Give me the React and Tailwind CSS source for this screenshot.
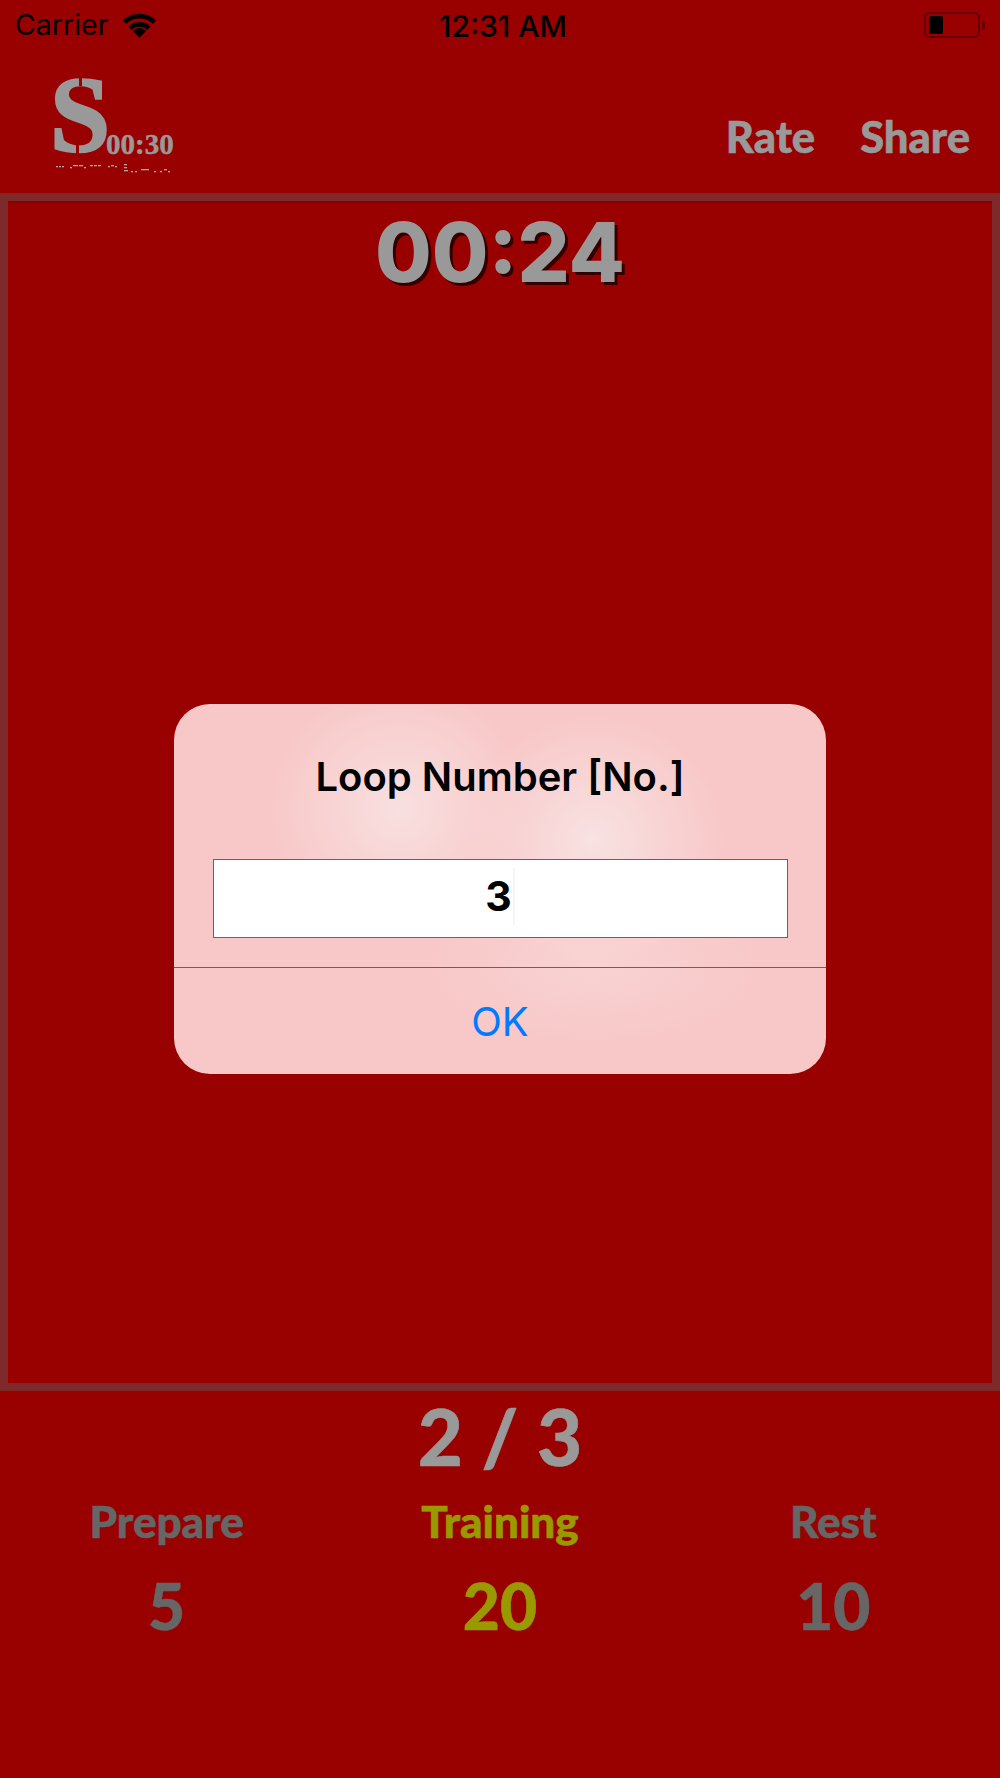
const Wifi = () => (
  <svg width="35" height="26" viewBox="0 0 34 25" className="ml-[14px]">
    <path d="M17 25 L10.5 18 A9.5 9.5 0 0 1 23.5 18 Z" fill="#000" />
    <path d="M7.8 15.6 A13.4 13.4 0 0 1 26.2 15.6" fill="none" stroke="#000" strokeWidth="4.6" />
    <path d="M2.4 9.8 A21 21 0 0 1 31.6 9.8" fill="none" stroke="#000" strokeWidth="4.6" />
  </svg>
);

const Battery = () => (
  <div className="flex items-center">
    <div className="flex h-[26px] w-[56px] items-center rounded-[5px] border-2 border-[#660000] pl-[3px]">
      <div className="h-[18px] w-[14px] rounded-[2px] bg-black" />
    </div>
    <div className="ml-[2px] h-[9px] w-[3px] rounded-r-full bg-[#660000]" />
  </div>
);

const Logo = () => {
  const dots = [
    [0, 0, 2], [3, 0, 2], [6, 0, 2], [14, 1, 2], [17, -1, 5], [23, -1, 4], [28, 1, 2],
    [34, -1, 3], [38, -1, 3], [42, -1, 3], [52, 0, 2], [55, -1, 3], [59, 0, 2],
    [68, -2, 3], [68, 1, 3], [68, 4, 4], [75, 5, 2], [79, 5, 2], [85, 3, 4], [89, 3, 4],
    [98, 5, 2], [104, 5, 2], [108, 3, 3], [112, 5, 2],
  ];
  return (
    <svg width="130" height="130" viewBox="0 0 130 130" className="ml-[50px] -mt-[8px] overflow-visible">
      <text x="0" y="109" fontFamily="Liberation Serif" fontWeight="700" fontSize="108" fill="#999" stroke="#999" strokeWidth="2.5">S</text>
      <rect x="29" y="34" width="3" height="10" fill="#990000" />
      <rect x="26" y="102" width="3" height="10" fill="#990000" />
      <text x="56" y="112" fontFamily="Liberation Serif" fontWeight="700" fontSize="29" fill="#999" stroke="#999" strokeWidth="0.5">00:30</text>
      {dots.map(([x, y, w], i) => (
        <rect key={i} x={x + 6} y={y + 124} width={w} height="1.3" fill="#aaa" />
      ))}
    </svg>
  );
};

const Stat = ({ label, value, color }) => (
  <div className={`flex flex-col items-center [-webkit-text-stroke:0.6px] ${color}`}>
    <div className="text-[44px] font-black leading-[48px]">{label}</div>
    <div className="mt-[28px] text-[64px] font-black leading-[66px]">{value}</div>
  </div>
);

const App = () => {
  return (
    <div className="relative flex h-[1778px] w-full flex-col overflow-hidden bg-[#990000] font-['Lato',sans-serif]">
      <div className="relative flex h-[50px] items-center justify-between pl-[15px] pr-[15px] font-['Inter',sans-serif] text-[28.5px] text-black">
        <div className="flex items-center">
          <span>Carrier</span>
          <Wifi />
        </div>
        <span className="absolute left-[439px] top-[4px] text-[30px] font-medium">12:31 AM</span>
        <Battery />
      </div>

      <div className="flex h-[143px] items-start justify-between">
        <Logo />
        <div className="mr-[30px] mt-[61px] flex gap-[45px] text-[43.5px] font-black leading-[50px] text-[#999] [-webkit-text-stroke:0.6px]">
          <span>Rate</span>
          <span>Share</span>
        </div>
      </div>

      <div className="h-[1198px] border-8 border-[#7f2a2a]">
        <div className="h-full border-t-2 border-[#880000] text-center">
          <div className="mt-[2px] font-['Inter',sans-serif] text-[82px] font-extrabold leading-[96px] text-[#999] [text-shadow:3px_3px_0_#330000]">
            00:24
          </div>
        </div>
      </div>

      <div className="mt-[3px] text-center text-[78px] font-black leading-[84px] text-[#999] [-webkit-text-stroke:0.6px]">2 / 3</div>

      <div className="mt-[19px] grid grid-cols-3">
        <Stat label="Prepare" value="5" color="text-[#666]" />
        <Stat label="Training" value="20" color="text-[#999900]" />
        <Stat label="Rest" value="10" color="text-[#666]" />
      </div>

      <div className="absolute inset-0 flex items-center justify-center">
        <div className="flex h-[370px] w-[652px] flex-col rounded-[36px] bg-[#f8c8c8] bg-[radial-gradient(ellipse_130px_125px_at_225px_105px,#f8e0e0,transparent),radial-gradient(ellipse_130px_125px_at_420px_136px,#f8e2e2,transparent),radial-gradient(ellipse_170px_80px_at_420px_262px,#f9d2d2,transparent)]">
          <div className="mt-[50px] text-center font-['Inter',sans-serif] text-[40px] font-semibold leading-[46px] text-black">
            Loop Number [No.]
          </div>
          <div className="mx-auto mt-[59px] flex h-[79px] w-[575px] items-center justify-center border border-[#c83a3a] bg-white pb-[3px] font-['Inter',sans-serif] text-[41px] font-bold text-black">
            <span>3</span>
            <span className="ml-[1px] h-[58px] w-[2px] bg-[#f5f5ff]" />
          </div>
          <div className="mt-[29px] h-px bg-[#c83a3a]" />
          <div className="flex flex-1 items-center justify-center pt-[1px] font-['Inter',sans-serif] text-[40px] text-[#007aff]">OK</div>
        </div>
      </div>
    </div>
  );
};

export default App;
